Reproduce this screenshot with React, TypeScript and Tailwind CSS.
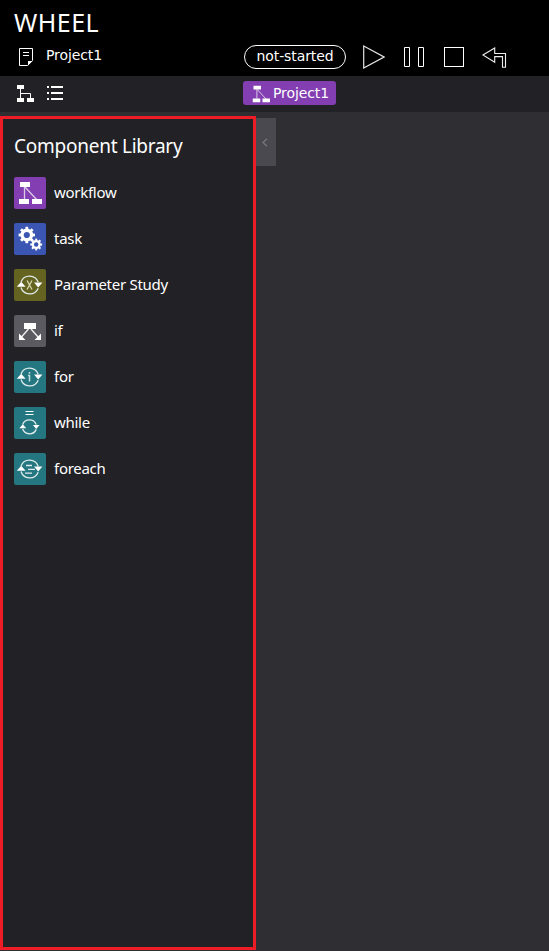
import React from "react";

type IconProps = { className?: string };

function WorkflowIcon({ className = "" }: IconProps) {
  return (
    <svg viewBox="0 0 32 32" className={className} fill="none">
      <path d="M10.5 10V22M11 10l12 13" stroke="#dccbe8" strokeWidth="1.3" />
      <path d="M6 5h10v5H6zM5 22h10v5H5zM18 22h10v5H18z" fill="#fff" />
    </svg>
  );
}

function Gear({ x, y, r }: { x: number; y: number; r: number }) {
  return (
    <g transform={`translate(${x} ${y})`}>
      <circle r={r * 0.58} fill="none" stroke="#fff" strokeWidth={r * 0.4} />
      {[0, 45, 90, 135, 180, 225, 270, 315].map((a) => (
        <rect key={a} x={-r * 0.17} y={-r} width={r * 0.34} height={r * 0.35} fill="#fff" transform={`rotate(${a})`} />
      ))}
    </g>
  );
}

function TaskIcon() {
  return (
    <svg viewBox="0 0 32 32" className="size-8">
      <Gear x={12.8} y={12} r={8.2} />
      <Gear x={22.2} y={21.5} r={5.9} />
    </svg>
  );
}

function LoopIcon({ kind }: { kind: "x" | "i" | "lines" | "while" }) {
  const small = kind === "while";
  return (
    <svg viewBox="0 0 32 32" className="size-8" fill="none" stroke="#dfeaea" strokeWidth="1.3">
      <g transform={small ? "translate(3.1 7.2) scale(.79)" : undefined}>
        <path d="M7 13A9.2 9.2 0 0 1 24.2 13.2M24.2 19.2A9.2 9.2 0 0 1 7 18.5" strokeWidth={small ? 1.7 : 1.3} />
        <path d="M2.8 17.8l4.4-5 4.4 5zM20 13.6h8.4l-4.2 5z" fill="#fff" stroke="none" />
      </g>
      {kind === "x" && <path d="M13 11.5l5 9M18 11.5l-5 9" stroke="#d8d8ae" strokeWidth="1.3" />}
      {kind === "i" && <path d="M15.5 11v1.8M14 14.5h1.5v6" strokeWidth="1.5" stroke="#c2dddf" />}
      {kind === "lines" && <path d="M12 12.5h6M14 16.4h7M11 20.2h7" strokeWidth="1.3" />}
      {small && <path d="M11.5 4.5h8M11.5 7.5h8" stroke="#fff" strokeWidth="1" />}
    </svg>
  );
}

function IfIcon() {
  return (
    <svg viewBox="0 0 32 32" className="size-8" fill="none">
      <path d="M14.5 14L7 22.5M17 14l7.5 8.5" stroke="#ededee" strokeWidth="1.4" />
      <path d="M10 8h12v6H10zM5 18.5V25h6.5zM27 18.5V25h-6.5z" fill="#fff" />
    </svg>
  );
}

const components = [
  { name: "workflow", color: "bg-[#833eb2]", icon: <WorkflowIcon className="size-8" /> },
  { name: "task", color: "bg-[#3b55b3]", icon: <TaskIcon /> },
  { name: "Parameter Study", color: "bg-[#646320]", icon: <LoopIcon kind="x" /> },
  { name: "if", color: "bg-[#5a5a60]", icon: <IfIcon /> },
  { name: "for", color: "bg-[#247780]", icon: <LoopIcon kind="i" /> },
  { name: "while", color: "bg-[#247780]", icon: <LoopIcon kind="while" /> },
  { name: "foreach", color: "bg-[#247780]", icon: <LoopIcon kind="lines" /> },
];

function Header() {
  return (
    <header className="h-[76px] bg-black">
      <h1 className="h-[45px] pl-3.5 font-['Noto_Sans',sans-serif] text-[25px] leading-[44px] tracking-[0.5px]">WHEEL</h1>
      <div className="flex h-[22px] items-center">
        <div className="flex w-[244px] items-center pl-[19px]">
          <svg width="14" height="18" viewBox="0 0 14 18" fill="none" className="mt-0.5">
            <path d="M.5.5h13v12l-5 5h-8z" stroke="#fff" />
            <path d="M9 17.5V13h4.5zM4 4h6v1H4zM4 7h6v1H4z" fill="#fff" />
          </svg>
          <span className="-mt-0.5 ml-[13px] text-[14px] leading-[18px] tracking-[-0.1px]">Project1</span>
        </div>
        <div className="mt-0.5 flex h-6 w-[102px] shrink-0 items-center justify-center rounded-full border border-white text-[14px] tracking-[-0.1px]">
          <span className="-mt-0.5">not-started</span>
        </div>
        <svg width="22" height="24" viewBox="0 0 22 24" fill="none" stroke="#e4e4e4" strokeWidth="1.2" className="ml-[17px] mt-0.5">
          <path d="M.7 1L21 12 .7 23z" />
        </svg>
        <svg width="21" height="20" fill="none" stroke="#fff" className="ml-[19px] mt-0.5">
          <path d="M.5.5h5v19h-5zM14.5.5h5v19h-5z" />
        </svg>
        <div className="ml-[19px] mt-0.5 size-5 border border-white" />
        <svg width="25" height="21" viewBox="0 0 25 21" fill="none" stroke="#eee" strokeWidth="1.1" className="ml-[18px] mt-0.5">
          <path d="M.9 8L12.7 1v5.5h10.8v13.7h-3V9.6h-7.8v5.6z" />
        </svg>
      </div>
    </header>
  );
}

function Toolbar() {
  return (
    <nav className="flex h-9 items-center bg-[#222226]">
      <div className="-mt-0.5 flex w-[243px] items-center gap-[13px] pl-[17px]">
        <svg width="17" height="17" viewBox="0 0 17 17" fill="none">
          <path d="M3.5 4v9M3.5 8.5h10V13" stroke="#fff" />
          <path d="M0 0h7v4H0zM0 13h7v4H0zM10 13h7v4h-7z" fill="#fff" />
        </svg>
        <svg width="16" height="14" viewBox="0 0 16 14" fill="#fff">
          <path d="M0 0h2v2H0zM4 0h12v2H4zM0 6h2v2H0zM4 6h12v2H4zM0 12h2v2H0zM4 12h12v2H4z" />
        </svg>
      </div>
      <div className="-mt-0.5 flex h-6 w-[93px] items-center rounded-[3px] bg-[#833eb2]">
        <WorkflowIcon className="ml-1.5 mt-px size-6" />
        <span className="text-[14px] tracking-[-0.1px]">Project1</span>
      </div>
    </nav>
  );
}

export default function App() {
  return (
    <div className="flex h-[951px] w-[549px] flex-col overflow-hidden bg-[#2f2e33] font-['DejaVu_Sans',sans-serif] text-white">
      <Header />
      <Toolbar />
      <div className="flex flex-1 items-start pt-1">
        <aside className="h-[834px] w-64 border-[3px] border-[#ee1c25] bg-[#222226] px-[11px]">
          <h2 className="mt-3.5 h-7 whitespace-nowrap font-['Noto_Sans',sans-serif] text-[19px] leading-[26px] tracking-[-0.25px]">Component Library</h2>
          <ul className="mt-4 flex flex-col gap-3.5">
            {components.map((c) => (
              <li key={c.name} className="flex h-8 items-center gap-2">
                <div className={`size-8 rounded-[2px] ${c.color}`}>{c.icon}</div>
                <span className="-mt-0.5 font-['Noto_Sans',sans-serif] text-[15px] leading-5 tracking-[-0.28px]">{c.name}</span>
              </li>
            ))}
          </ul>
        </aside>
        <button className="mt-0.5 flex h-12 w-5 items-center justify-center bg-[#4a4950]">
          <svg width="6" height="9" viewBox="0 0 6 9" fill="none" stroke="#77767c" strokeWidth="1.3" className="-ml-0.5">
            <path d="M5 .8L1 4.5l4 3.7" />
          </svg>
        </button>
      </div>
    </div>
  );
}
